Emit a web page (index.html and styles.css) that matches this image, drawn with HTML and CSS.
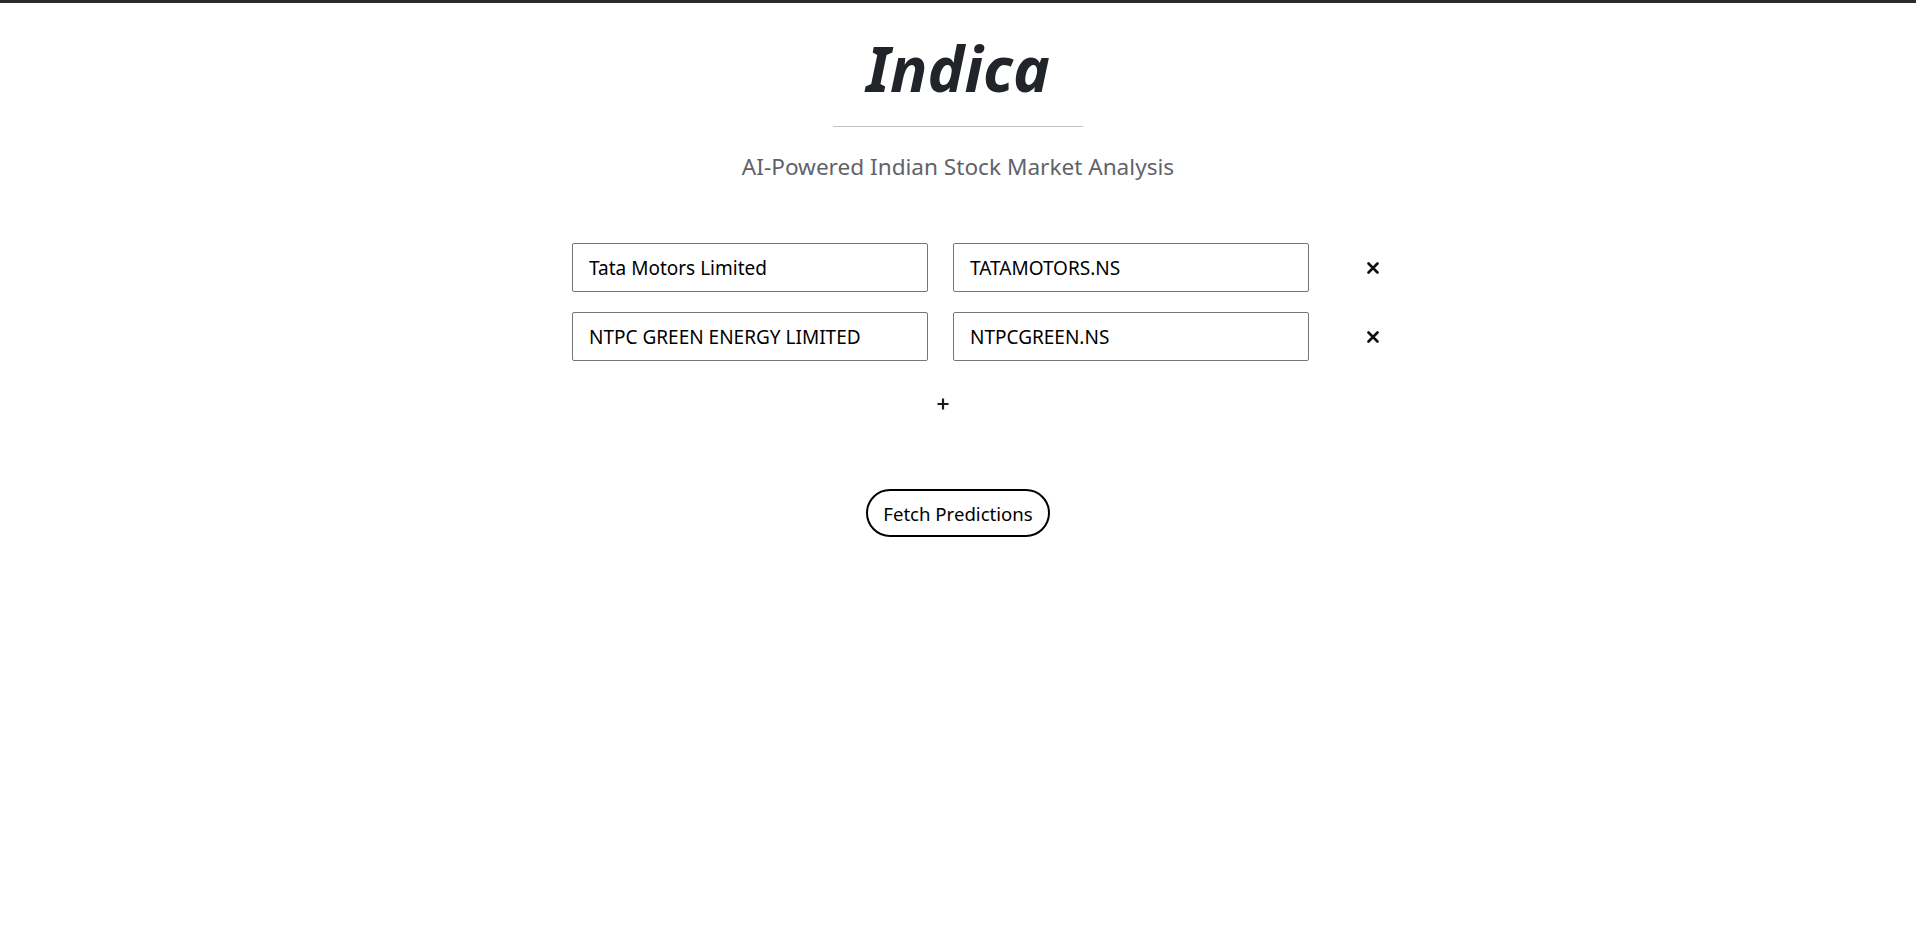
FILE: index.html
```html
<!DOCTYPE html>
<html lang="en">
<head>
<meta charset="utf-8">
<title>Indica</title>
<link rel="stylesheet" href="styles.css">
</head>
<body>
<div class="topbar"></div>
<header class="hero">
  <h1 class="title">Indica</h1>
  <div class="divider"></div>
  <p class="subtitle">AI-Powered Indian Stock Market Analysis</p>
</header>
<main class="form">
  <div class="rows">
    <div class="row">
      <input class="field" type="text" value="Tata Motors Limited">
      <input class="field" type="text" value="TATAMOTORS.NS">
      <button class="remove" type="button" aria-label="Remove">
        <svg width="12" height="12" viewBox="0 0 12 12"><path d="M1.5 1.5 L10.5 10.5 M10.5 1.5 L1.5 10.5" stroke="#111" stroke-width="2.6" stroke-linecap="round"/></svg>
      </button>
    </div>
    <div class="row">
      <input class="field" type="text" value="NTPC GREEN ENERGY LIMITED">
      <input class="field" type="text" value="NTPCGREEN.NS">
      <button class="remove" type="button" aria-label="Remove">
        <svg width="12" height="12" viewBox="0 0 12 12"><path d="M1.5 1.5 L10.5 10.5 M10.5 1.5 L1.5 10.5" stroke="#111" stroke-width="2.6" stroke-linecap="round"/></svg>
      </button>
    </div>
  </div>
  <div class="addrow">
    <button class="add" type="button" aria-label="Add">
      <svg width="12" height="12" viewBox="0 0 12 12"><path d="M6 0.5 V11.5 M0.5 6 H11.5" stroke="#1a1d24" stroke-width="2.2"/></svg>
    </button>
  </div>
  <div class="actions">
    <button class="fetch" type="button">Fetch Predictions</button>
  </div>
</main>
</body>
</html>
```
FILE: styles.css
```css
html, body {
  margin: 0;
  padding: 0;
  background: #fff;
}
body {
  font-family: "Noto Sans", "Open Sans", "Liberation Sans", sans-serif;
  color: #000;
}
.topbar {
  height: 3px;
  background: #2b2b2f;
}
.hero {
  display: flex;
  flex-direction: column;
  align-items: center;
  padding-top: 25px;
}
.title {
  margin: 0;
  font-size: 62px;
  line-height: 80px;
  font-weight: 700;
  font-style: italic;
  color: #212529;
}
.divider {
  width: 250px;
  height: 1px;
  background: #bfc3c9;
  margin-top: 18px;
}
.subtitle {
  margin: 25px 0 0;
  font-size: 22.6px;
  line-height: 30px;
  color: #5f6369;
}
.form {
  width: 772px;
  margin: 61px auto 0;
  display: flex;
  flex-direction: column;
}
.rows {
  display: flex;
  flex-direction: column;
  gap: 20px;
}
.row {
  display: flex;
  align-items: center;
  gap: 25px;
}
.field {
  box-sizing: border-box;
  width: 356px;
  height: 49px;
  flex-shrink: 0;
  padding: 0 16px;
  border: 1px solid #767676;
  border-radius: 2px;
  font-family: inherit;
  font-size: 19px;
  color: #000;
  background: #fff;
}
.remove {
  flex-shrink: 0;
  width: 30px;
  height: 30px;
  margin-left: 24px;
  padding: 0;
  border: none;
  background: transparent;
  display: flex;
  align-items: center;
  justify-content: center;
}
.addrow {
  width: 742px;
  display: flex;
  justify-content: center;
  margin-top: 28px;
}
.add {
  width: 30px;
  height: 30px;
  padding: 0;
  border: none;
  background: transparent;
  display: flex;
  align-items: center;
  justify-content: center;
}
.actions {
  display: flex;
  justify-content: center;
  margin-top: 70px;
}
.fetch {
  box-sizing: border-box;
  height: 48px;
  padding: 0 15px;
  border: 2px solid #000;
  border-radius: 24px;
  background: #fff;
  font-family: inherit;
  font-size: 18.6px;
  color: #000;
}
```
